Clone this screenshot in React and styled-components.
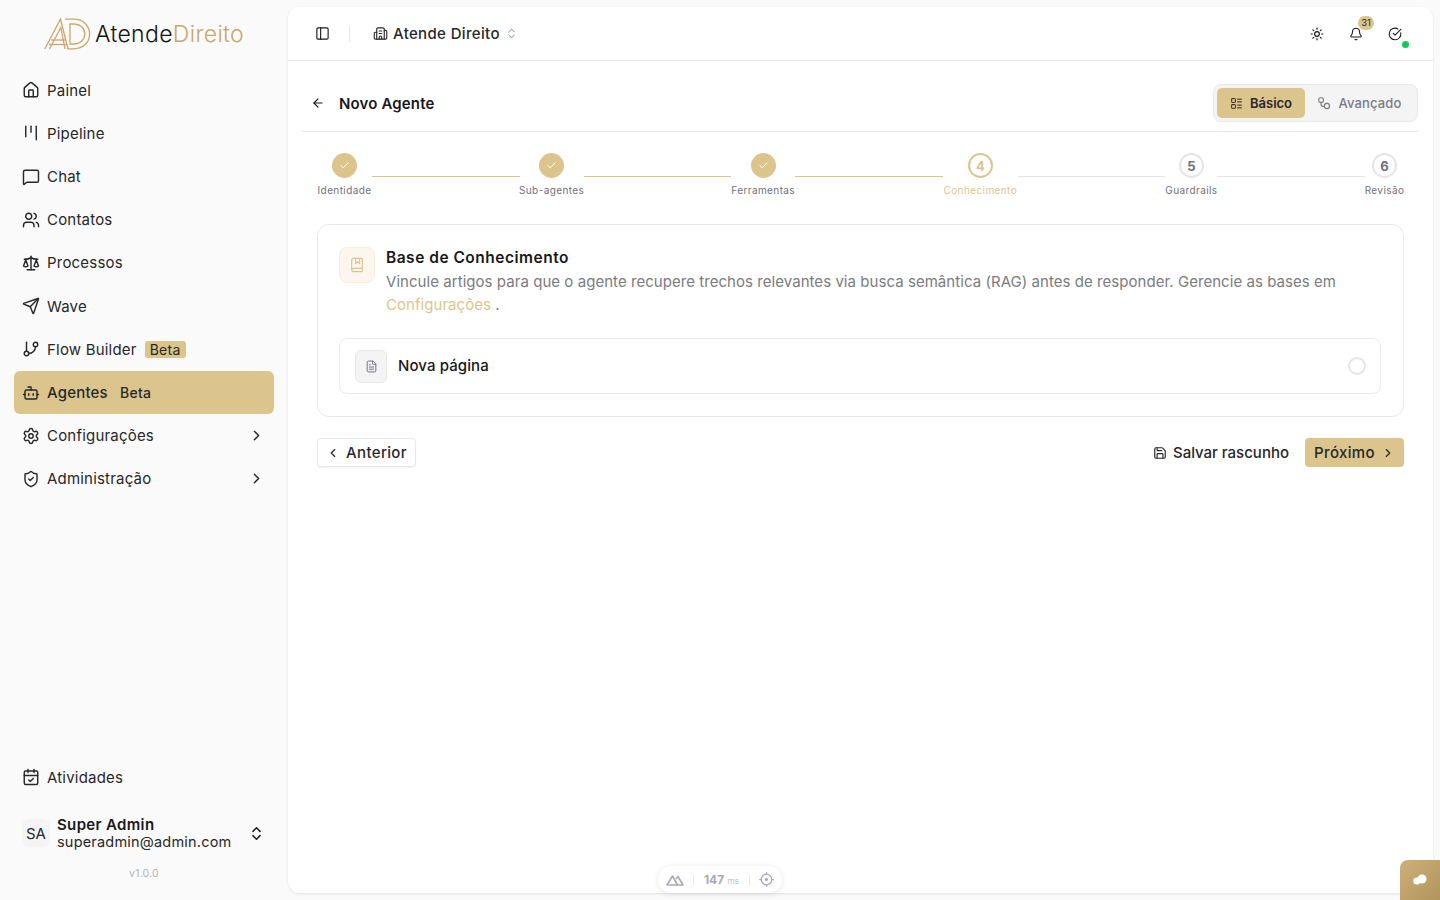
import React from 'react';
import styled, { createGlobalStyle } from 'styled-components';
import {
  ArrowLeft, Bell, BookMarked, Bot, Building2, CalendarCheck, Check, ChevronLeft, ChevronRight,
  ChevronsUpDown, CircleCheckBig, FileText, GitBranch, House, Kanban, LayoutList, MessageSquare,
  PanelLeft, Save, Scale, Send, Settings, ShieldCheck, Sun, Users,
} from 'lucide-react';

const gold = '#dcc58c';
const logoGold = '#c9a76a';
const ink = '#18181b';

const GlobalStyle = createGlobalStyle`
  html, body { margin: 0; padding: 0; height: 100%; }
  body {
    background: #fafafa;
    color: ${ink};
    font-family: 'Inter', 'Liberation Sans', sans-serif;
    overflow: hidden;
  }
  * { box-sizing: border-box; }
`;

const Shell = styled.div`
  position: relative;
  display: flex;
  height: 900px;
  width: 1440px;
  overflow: hidden;
`;

const Sidebar = styled.aside`
  width: 288px;
  flex: none;
  display: flex;
  flex-direction: column;
  padding: 0 14px;
`;

const LogoRow = styled.div`
  height: 68.6px;
  display: flex;
  align-items: center;
  justify-content: center;
  gap: 4px;
`;

const LogoWord = styled.span`
  font-size: 23px;
  font-weight: 300;
  letter-spacing: 0.35px;
  color: #111;
  span { color: ${logoGold}; }
`;

const Nav = styled.nav`
  display: flex;
  flex-direction: column;
`;

const NavItem = styled.div`
  height: 43.2px;
  display: flex;
  align-items: center;
  gap: 7px;
  padding: 0 9px 0 8px;
  border-radius: 6px;
  font-size: 15px;
  letter-spacing: 0.2px;
  color: #27272a;
  background: ${(p) => (p.$active ? gold : 'transparent')};
  font-weight: ${(p) => (p.$active ? 500 : 400)};
  svg { flex: none; }
`;

const NavLabel = styled.span`
  line-height: 1;
`;

const Tag = styled.span`
  font-size: 14px;
  letter-spacing: 0.3px;
  line-height: 17px;
  padding: 0 5px;
  border-radius: 3px;
  color: #27272a;
  background: ${(p) => (p.$plain ? 'transparent' : gold)};
  margin-left: ${(p) => (p.$plain ? '0' : '1px')};
`;

const NavArrow = styled(ChevronRight)`
  margin-left: auto;
`;

const SidebarFoot = styled.div`
  margin-top: auto;
  display: flex;
  flex-direction: column;
`;

const UserRow = styled.div`
  display: flex;
  align-items: center;
  margin-top: 12px;
  padding: 0 9px 0 8px;
  height: 44px;
`;

const Avatar = styled.div`
  width: 28px;
  height: 28px;
  border-radius: 7px;
  background: #f4f4f5;
  display: flex;
  align-items: center;
  justify-content: center;
  font-size: 15px;
  color: #27272a;
  flex: none;
`;

const UserText = styled.div`
  margin-left: 7px;
  display: flex;
  flex-direction: column;
  flex: 1;
`;

const UserName = styled.div`
  font-size: 15px;
  font-weight: 600;
  letter-spacing: 0.35px;
  line-height: 17px;
`;

const UserMail = styled.div`
  font-size: 14.5px;
  letter-spacing: 0.2px;
  line-height: 17px;
  color: #27272a;
`;

const Version = styled.div`
  text-align: center;
  font-size: 10.5px;
  color: #b4b4b8;
  margin-top: 12px;
  height: 33px;
  letter-spacing: 0.2px;
`;

const Main = styled.main`
  width: 1145px;
  height: 886px;
  margin-top: 7px;
  background: #fff;
  border-radius: 12px;
  box-shadow: 0 1px 3px rgba(0, 0, 0, 0.1);
  display: flex;
  flex-direction: column;
`;

const Topbar = styled.header`
  height: 54px;
  flex: none;
  display: flex;
  align-items: center;
  padding: 0 31px 0 27px;
  border-bottom: 1px solid #e8e8e8;
`;

const TopDivider = styled.span`
  width: 1px;
  height: 16px;
  background: #e8e8e8;
  margin: 0 23px 0 19px;
`;

const Workspace = styled.div`
  display: flex;
  align-items: center;
  gap: 5px;
  font-size: 15px;
  font-weight: 500;
  letter-spacing: 0.35px;
  color: #27272a;
`;

const TopActions = styled.div`
  margin-left: auto;
  display: flex;
  align-items: center;
  gap: 25px;
`;

const IconSlot = styled.div`
  position: relative;
  width: 14px;
  height: 14px;
  display: flex;
  align-items: center;
  justify-content: center;
`;

const CountBadge = styled.span`
  position: absolute;
  top: -11px;
  left: 9px;
  width: 16px;
  height: 14px;
  border-radius: 7px;
  background: ${gold};
  font-size: 9.5px;
  line-height: 14px;
  text-align: center;
  color: #27272a;
`;

const StatusDot = styled.span`
  position: absolute;
  right: -7px;
  bottom: -7px;
  width: 7px;
  height: 7px;
  border-radius: 50%;
  background: #10c95c;
`;

const Content = styled.div`
  padding: 0 15px 0 14px;
  display: flex;
  flex-direction: column;
`;

const PageHead = styled.div`
  height: 71px;
  display: flex;
  align-items: center;
  border-bottom: 1px solid #e8e8e8;
  padding: 14px 0 0 9px;
`;

const PageTitle = styled.h1`
  margin: 0 0 0 14px;
  font-size: 15px;
  font-weight: 600;
  letter-spacing: 0.15px;
  color: ${ink};
`;

const ModeSwitch = styled.div`
  margin-left: auto;
  display: flex;
  width: 205px;
  height: 38px;
  padding: 3px;
  border: 1px solid #e8e8e8;
  border-radius: 8px;
  background: #f4f4f5;
`;

const ModeButton = styled.div`
  display: flex;
  align-items: center;
  justify-content: center;
  gap: 7px;
  width: ${(p) => (p.$active ? '88px' : '109px')};
  border-radius: 5px;
  font-size: 13px;
  font-weight: ${(p) => (p.$active ? 600 : 500)};
  letter-spacing: ${(p) => (p.$active ? '0' : '0.15px')};
  background: ${(p) => (p.$active ? gold : 'transparent')};
  color: ${(p) => (p.$active ? '#27272a' : '#7b7b80')};
`;

const Stepper = styled.div`
  display: flex;
  margin: 21px 0 0 15px;
  width: 1087px;
`;

const Step = styled.div`
  width: ${(p) => p.$w}px;
  flex: none;
  display: flex;
  flex-direction: column;
  align-items: center;
`;

const StepDot = styled.div`
  width: 25px;
  height: 25px;
  border-radius: 50%;
  display: flex;
  align-items: center;
  justify-content: center;
  font-size: 13px;
  font-weight: 700;
  background: ${(p) => (p.$state === 'done' ? gold : '#fff')};
  border: ${(p) => (p.$state === 'done' ? 'none' : `2px solid ${p.$state === 'active' ? gold : '#e5e5e5'}`)};
  color: ${(p) => (p.$state === 'active' ? gold : '#71717a')};
`;

const StepLabel = styled.span`
  margin-top: 5px;
  font-size: 10px;
  line-height: 14px;
  letter-spacing: 0.4px;
  white-space: nowrap;
  color: ${(p) => (p.$active ? gold : '#71717a')};
`;

const StepLine = styled.div`
  flex: 1;
  height: 1px;
  margin-top: 23px;
  background: ${(p) => (p.$done ? '#dfc481' : '#e5e5e5')};
`;

const Card = styled.section`
  margin: 27px 0 0 15px;
  width: 1087px;
  height: 193px;
  border: 1px solid #e8e8e8;
  border-radius: 12px;
  padding: 22px 22px 0 21px;
`;

const CardHead = styled.div`
  display: flex;
  gap: 11px;
`;

const BookBox = styled.div`
  width: 36px;
  height: 36px;
  flex: none;
  border-radius: 8px;
  border: 1px solid #f6eedb;
  background: #fbf7ee;
  display: flex;
  align-items: center;
  justify-content: center;
  color: ${gold};
`;

const CardText = styled.div`
  flex: 1;
`;

const CardTitle = styled.h2`
  margin: 0;
  font-size: 15.5px;
  font-weight: 600;
  letter-spacing: 0.5px;
  line-height: 21px;
`;

const CardDesc = styled.p`
  margin: 2px 0 0;
  font-size: 15px;
  line-height: 23px;
  letter-spacing: 0.05px;
  color: #7b7b80;
  a { color: ${gold}; text-decoration: none; }
`;

const ArticleRow = styled.div`
  margin-top: 22px;
  height: 56px;
  border: 1px solid #e8e8e8;
  border-radius: 8px;
  display: flex;
  align-items: center;
  padding: 0 14px 0 15px;
  gap: 11px;
`;

const FileBox = styled.div`
  width: 32px;
  height: 33px;
  border-radius: 6px;
  border: 1px solid #e8e8e8;
  background: #f4f4f5;
  display: flex;
  align-items: center;
  justify-content: center;
  color: #71717a;
`;

const ArticleName = styled.span`
  font-size: 15px;
  font-weight: 500;
  letter-spacing: 0.1px;
  padding-bottom: 2px;
`;

const Radio = styled.span`
  margin-left: auto;
  width: 18px;
  height: 18px;
  border-radius: 50%;
  border: 2px solid #e5e5e5;
`;

const Actions = styled.div`
  margin: 21px 0 0 15px;
  width: 1087px;
  display: flex;
  align-items: center;
`;

const Button = styled.button`
  height: 29px;
  display: flex;
  align-items: center;
  gap: 6px;
  border-radius: 4px;
  font-family: inherit;
  font-size: 15px;
  letter-spacing: 0.35px;
  font-weight: 500;
  color: #27272a;
  padding: 0;
`;

const OutlineButton = styled(Button)`
  width: 99px;
  justify-content: center;
  background: #fff;
  border: 1px solid #e8e8e8;
  box-shadow: 0 1px 2px rgba(0, 0, 0, 0.06);
`;

const GhostButton = styled(Button)`
  margin-left: auto;
  background: none;
  border: none;
  letter-spacing: 0;
`;

const GoldButton = styled(Button)`
  margin-left: 16px;
  width: 99px;
  justify-content: center;
  background: ${gold};
  border: none;
`;

const DevPill = styled.div`
  position: absolute;
  left: 658px;
  top: 866px;
  width: 124px;
  height: 27px;
  border-radius: 14px;
  background: #fff;
  box-shadow: 0 1px 6px rgba(0, 0, 0, 0.1);
  display: flex;
  align-items: center;
  justify-content: space-between;
  padding: 0 8px;
  color: #a1a1aa;
  opacity: 0.9;
`;

const DevSep = styled.span`
  width: 1px;
  height: 10px;
  background: #e5e5e5;
`;

const DevTime = styled.span`
  font-size: 12px;
  font-weight: 700;
  white-space: nowrap;
  small { font-size: 8.5px; font-weight: 400; color: #bbb; margin-left: 3px; }
`;

const ChatBubble = styled.div`
  position: absolute;
  right: 0;
  bottom: 0;
  width: 40px;
  height: 40px;
  border-radius: 8px 0 0 0;
  background: linear-gradient(135deg, #cdb07a, #b2955c);
  display: flex;
  align-items: center;
  justify-content: center;
`;

const LogoMark = () => (
  <svg width="47" height="32" viewBox="0 0 47 32" fill="none" stroke={logoGold} strokeWidth="1.3">
    <path d="M0.8 31 L16.5 1 L24 31" />
    <path d="M5.5 31 L16.8 9.5 L21 31" />
    <path d="M7 22 H22" />
    <path d="M5 26.5 H23" />
    <path d="M21 1.2 H30 C39 1.2 45.6 7.5 45.6 16 C45.6 24.5 39 30.8 30 30.8 H23.5" />
    <path d="M26 6 H30 C36 6 40.8 10 40.8 16 C40.8 22 36 26 30 26 H26 Z" />
  </svg>
);

const RouteGlyph = () => (
  <svg width="14" height="14" viewBox="0 0 24 24" fill="none" stroke="currentColor" strokeWidth="2" strokeLinecap="round">
    <rect x="3" y="3" width="8" height="8" rx="3" />
    <circle cx="17" cy="17" r="4.5" />
    <path d="M7 11v3a4 4 0 0 0 4 4h1.5" />
  </svg>
);

const NuxtGlyph = () => (
  <svg width="18" height="12" viewBox="0 0 18 12" fill="none" stroke="currentColor" strokeWidth="1.6" strokeLinejoin="round">
    <path d="M1 11 L6.5 2 L11.5 11 Z" />
    <path d="M10 5 L12 2.5 L17 11 H11.5" />
  </svg>
);

const TargetGlyph = () => (
  <svg width="15" height="15" viewBox="0 0 24 24" fill="none" stroke="currentColor" strokeWidth="2" strokeLinecap="round">
    <circle cx="12" cy="12" r="8.5" />
    <circle cx="12" cy="12" r="1.5" fill="currentColor" />
    <path d="M12 1v3M12 20v3M1 12h3M20 12h3" />
  </svg>
);

const BubbleGlyph = () => (
  <svg width="16" height="12" viewBox="0 0 16 12" fill="#fff">
    <circle cx="10" cy="5" r="4.6" />
    <circle cx="4.8" cy="7" r="3.6" />
  </svg>
);

const navItems = [
  { icon: House, label: 'Painel' },
  { icon: Kanban, label: 'Pipeline' },
  { icon: MessageSquare, label: 'Chat' },
  { icon: Users, label: 'Contatos' },
  { icon: Scale, label: 'Processos' },
  { icon: Send, label: 'Wave' },
  { icon: GitBranch, label: 'Flow Builder', tag: 'Beta' },
  { icon: Bot, label: 'Agentes', tag: 'Beta', active: true },
  { icon: Settings, label: 'Configurações', arrow: true },
  { icon: ShieldCheck, label: 'Administração', arrow: true },
];

const steps = [
  { label: 'Identidade', w: 55, state: 'done' },
  { label: 'Sub-agentes', w: 64, state: 'done' },
  { label: 'Ferramentas', w: 64, state: 'done' },
  { label: 'Conhecimento', w: 75, state: 'active', n: 4 },
  { label: 'Guardrails', w: 52, state: 'todo', n: 5 },
  { label: 'Revisão', w: 39, state: 'todo', n: 6 },
];

const App = () => (
  <Shell>
    <GlobalStyle />
    <Sidebar>
      <LogoRow>
        <LogoMark />
        <LogoWord>Atende<span>Direito</span></LogoWord>
      </LogoRow>
      <Nav>
        {navItems.map(({ icon: Icon, label, tag, active, arrow }) => (
          <NavItem key={label} $active={active}>
            <Icon size={18} strokeWidth={1.9} />
            <NavLabel>{label}</NavLabel>
            {tag && <Tag $plain={active}>{tag}</Tag>}
            {arrow && <NavArrow size={17} strokeWidth={2} />}
          </NavItem>
        ))}
      </Nav>
      <SidebarFoot>
        <NavItem>
          <CalendarCheck size={18} strokeWidth={1.9} />
          <NavLabel>Atividades</NavLabel>
        </NavItem>
        <UserRow>
          <Avatar>SA</Avatar>
          <UserText>
            <UserName>Super Admin</UserName>
            <UserMail>superadmin@admin.com</UserMail>
          </UserText>
          <ChevronsUpDown size={17} strokeWidth={2} />
        </UserRow>
        <Version>v1.0.0</Version>
      </SidebarFoot>
    </Sidebar>
    <Main>
      <Topbar>
        <PanelLeft size={15} strokeWidth={1.8} />
        <TopDivider />
        <Workspace>
          <Building2 size={15} strokeWidth={1.8} />
          Atende Direito
          <ChevronsUpDown size={13} strokeWidth={1.6} color="#71717a" />
        </Workspace>
        <TopActions>
          <IconSlot><Sun size={14} strokeWidth={2} /></IconSlot>
          <IconSlot>
            <Bell size={16} strokeWidth={1.8} />
            <CountBadge>31</CountBadge>
          </IconSlot>
          <IconSlot>
            <CircleCheckBig size={16} strokeWidth={1.8} />
            <StatusDot />
          </IconSlot>
        </TopActions>
      </Topbar>
      <Content>
        <PageHead>
          <ArrowLeft size={14} strokeWidth={2} />
          <PageTitle>Novo Agente</PageTitle>
          <ModeSwitch>
            <ModeButton $active><LayoutList size={13} strokeWidth={1.8} />Básico</ModeButton>
            <ModeButton><RouteGlyph />Avançado</ModeButton>
          </ModeSwitch>
        </PageHead>
        <Stepper>
          {steps.map((s, i) => (
            <React.Fragment key={s.label}>
              <Step $w={s.w}>
                <StepDot $state={s.state}>
                  {s.state === 'done' ? <Check size={11} color="#fff" strokeWidth={2} /> : s.n}
                </StepDot>
                <StepLabel $active={s.state === 'active'}>{s.label}</StepLabel>
              </Step>
              {i < steps.length - 1 && <StepLine $done={i < 3} />}
            </React.Fragment>
          ))}
        </Stepper>
        <Card>
          <CardHead>
            <BookBox><BookMarked size={16} strokeWidth={1.7} /></BookBox>
            <CardText>
              <CardTitle>Base de Conhecimento</CardTitle>
              <CardDesc>
                Vincule artigos para que o agente recupere trechos relevantes via busca semântica (RAG) antes de responder. Gerencie as bases em{' '}
                <a href="#config">Configurações</a> .
              </CardDesc>
            </CardText>
          </CardHead>
          <ArticleRow>
            <FileBox><FileText size={13} strokeWidth={1.8} /></FileBox>
            <ArticleName>Nova página</ArticleName>
            <Radio />
          </ArticleRow>
        </Card>
        <Actions>
          <OutlineButton><ChevronLeft size={14} strokeWidth={2} />Anterior</OutlineButton>
          <GhostButton><Save size={14} strokeWidth={2} />Salvar rascunho</GhostButton>
          <GoldButton>Próximo<ChevronRight size={14} strokeWidth={2} /></GoldButton>
        </Actions>
      </Content>
    </Main>
    <DevPill>
      <NuxtGlyph />
      <DevSep />
      <DevTime>147<small>ms</small></DevTime>
      <DevSep />
      <TargetGlyph />
    </DevPill>
    <ChatBubble><BubbleGlyph /></ChatBubble>
  </Shell>
);

export default App;
